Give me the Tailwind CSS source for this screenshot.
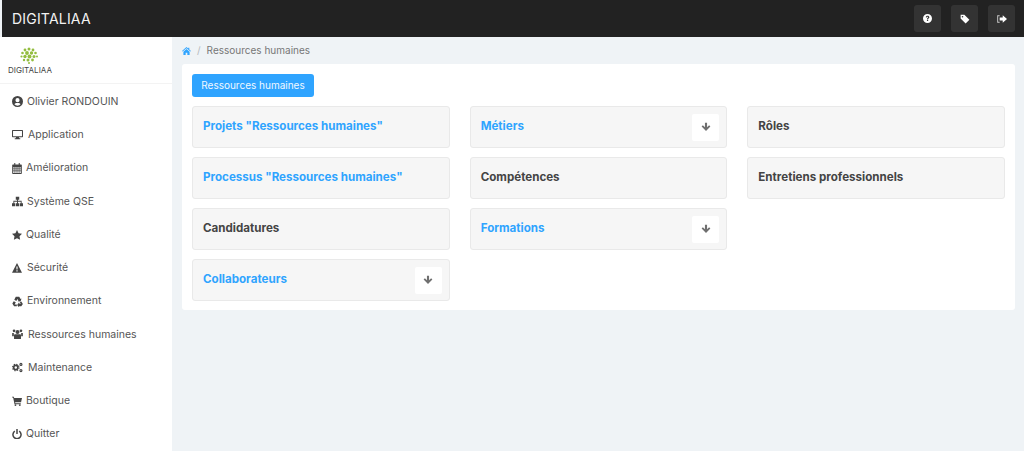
<!doctype html>
<html lang="fr">

<head>
  <meta charset="UTF-8" />
  <title>DIGITALIAA</title>
  <script src="https://cdn.jsdelivr.net/npm/@tailwindcss/browser@4"></script>
</head>

<body class="bg-[#eff3f6] font-['Inter','Noto_Sans',sans-serif] h-[451px] overflow-hidden">
  <header class="h-[37px] ml-[2px] bg-[#222222] flex items-center justify-between pl-[10px] pr-[9px]">
    <span class="text-[#f2f2f2] text-[14px] tracking-[0.2px]">DIGITALIAA</span>
    <div class="flex gap-[10px]">
      <button class="w-[27px] h-[27px] rounded-[3px] bg-[#333333] flex items-center justify-center">
        <svg class="w-[9px] h-[9px]" viewBox="0 0 16 16" fill="#fff"><path fill-rule="evenodd" d="M8 0a8 8 0 100 16A8 8 0 008 0zM7 10h2.200v2.300H7zM4.800 5.800C5 4 6.300 3 8.100 3c1.900 0 3.200 1.100 3.200 2.700 0 1.200-.7 1.800-1.400 2.300-.6.400-.8.700-.8 1.200H7c0-1.200.4-1.800 1.100-2.300.5-.4.900-.6.900-1.100 0-.4-.4-.7-.9-.7-.6 0-1 .3-1.100 1z"/></svg>
      </button>
      <button class="w-[27px] h-[27px] rounded-[3px] bg-[#333333] flex items-center justify-center">
        <svg class="w-[10px] h-[10px]" viewBox="0 0 16 16" fill="#fff"><path fill-rule="evenodd" d="M1 1h6l8 8-6 6-8-8zM4 3a1.300 1.300 0 100 2.600A1.300 1.300 0 004 3z"/></svg>
      </button>
      <button class="w-[27px] h-[27px] rounded-[3px] bg-[#333333] flex items-center justify-center">
        <svg class="w-[11px] h-[10px]" viewBox="0 0 18 16" fill="#fff"><path d="M11 2l7 6-7 6v-3.500H6v-5h5z"/><path d="M6 2H2v12h4v-1.500H3.500v-9H6z" fill="#ccc"/></svg>
      </button>
    </div>
  </header>

  <div class="flex">
    <aside class="w-[172px] h-[414px] bg-white shrink-0 text-[#555555] text-[10.5px]">
      <div class="h-[47px] border-b border-[#f3f3f3] pl-[8px] pt-[10px]">
        <div class="w-[44px] flex flex-col items-center">
          <svg class="w-[18px] h-[17px] shrink-0 -translate-x-[1px]" viewBox="0 0 18 17" fill="#93bd3f">
            <circle cx="9" cy="2" r="1.500"/><circle cx="5" cy="3" r="1.400"/><circle cx="13" cy="3" r="1.400"/>
            <circle cx="2.500" cy="6" r="1.300"/><circle cx="7" cy="6" r="1.900"/><circle cx="11.500" cy="6" r="1.700"/><circle cx="15.500" cy="6" r="1.300"/>
            <circle cx="1.500" cy="9.500" r="1.100"/><circle cx="5" cy="9.500" r="1.700"/><circle cx="9.500" cy="9.500" r="2"/><circle cx="14" cy="9.500" r="1.500"/><circle cx="17" cy="9.500" r="1"/>
            <circle cx="4" cy="13" r="1.200"/><circle cx="8" cy="13" r="1.500"/><circle cx="12.500" cy="13" r="1.400"/><circle cx="9" cy="16" r="1"/>
          </svg>
          <span class="text-[8px] leading-[9px] mt-[2px] text-[#444444] whitespace-nowrap">DIGITALIAA</span>
        </div>
      </div>
      <nav class="flex flex-col pl-[12px] pt-[1px]">
        <a class="h-[33.25px] flex items-center gap-[4px]">
          <svg class="w-[11px] h-[11px]" viewBox="0 0 16 16" fill="#444"><path fill-rule="evenodd" d="M8 0a8 8 0 100 16A8 8 0 008 0zm0 3a3 3 0 110 6 3 3 0 010-6zm0 11a6 6 0 01-4.500-2c.6-1.200 2-1.800 4.500-1.800s3.900.6 4.500 1.800A6 6 0 018 14z"/></svg>
          <span>Olivier RONDOUIN</span>
        </a>
        <a class="h-[33.25px] flex items-center gap-[5px]">
          <svg class="w-[11px] h-[11px]" viewBox="0 0 16 16" fill="#444"><path fill-rule="evenodd" d="M1 1.500h14a1 1 0 011 1V11a1 1 0 01-1 1h-5l.5 1.500H12V15H4v-1.500h1.500L6 12H1a1 1 0 01-1-1V2.500a1 1 0 011-1zm.5 1.500v7.500h13V3z"/></svg>
          <span>Application</span>
        </a>
        <a class="h-[33.25px] flex items-center gap-[4px]">
          <svg class="w-[10px] h-[11px]" viewBox="0 0 14 16" fill="#444"><path fill-rule="evenodd" d="M3 0h1.500v2h5V0H11v2h2a1 1 0 011 1v12a1 1 0 01-1 1H1a1 1 0 01-1-1V3a1 1 0 011-1h2zM1.500 6v2h2V6zm3 0v2h2V6zm3 0v2h2V6zm3 0v2h2V6zm-9 3v2h2V9zm3 0v2h2V9zm3 0v2h2V9zm3 0v2h2V9zm-9 3v2.500h2V12zm3 0v2.500h2V12zm3 0v2.500h2V12zm3 0v2.500h2V12z"/></svg>
          <span>Amélioration</span>
        </a>
        <a class="h-[33.25px] flex items-center gap-[4px]">
          <svg class="w-[11px] h-[11px]" viewBox="0 0 16 16" fill="#444"><path d="M5.500 1h5v4.500H8.700V7H14v3.500h2V15h-4.500v-4.500h1.200V8.300H8.700v2.200h1.800V15h-5v-4.500h1.800V8.300H3.300v2.200h1.200V15H0v-4.500h2V7h5.300V5.500H5.500z"/></svg>
          <span>Système QSE</span>
        </a>
        <a class="h-[33.25px] flex items-center gap-[4px]">
          <svg class="w-[10px] h-[10px]" viewBox="0 0 16 16" fill="#444"><path d="M8 0l2.500 5.200 5.500.8-4 4 1 5.700L8 13l-5 2.700L4 10 0 6l5.500-.8z"/></svg>
          <span>Qualité</span>
        </a>
        <a class="h-[33.25px] flex items-center gap-[5px]">
          <svg class="w-[10px] h-[10px]" viewBox="0 0 16 16" fill="#444"><path fill-rule="evenodd" d="M8 0l8 15.500H0zM7 5.500l.2 5h1.600l.2-5zM7 11.700v2h2v-2z"/></svg>
          <span>Sécurité</span>
        </a>
        <a class="h-[33.25px] flex items-center gap-[4px]">
          <svg class="w-[11px] h-[11px]" viewBox="0 0 16 16" fill="#444"><path d="M5.500 1h5l2 3.300 1.300-.8L12.500 8 8 7.800l1.300-.8L8 4.500 6.300 7.300 3.300 5.600z"/><path d="M2.500 7.500l3 1.700-1.700 3H7V15H3L.5 11z"/><path d="M13.500 8l2.300 3.500L13.500 15H10v1.500L7.500 13 10 9.500V11h3.500L11 9.500z"/></svg>
          <span>Environnement</span>
        </a>
        <a class="h-[33.25px] flex items-center gap-[5px]">
          <svg class="w-[11px] h-[10px]" viewBox="0 0 16 15" fill="#444"><circle cx="8" cy="4.500" r="3"/><circle cx="2.800" cy="2.800" r="2"/><circle cx="13.200" cy="2.800" r="2"/><path d="M3.500 8h9l.7 1v6H2.800V9z"/><path d="M0 6h2.500v5H0zM13.500 6H16v5h-2.500z"/></svg>
          <span>Ressources humaines</span>
        </a>
        <a class="h-[33.25px] flex items-center gap-[5px]">
          <svg class="w-[11px] h-[11px]" viewBox="0 0 16 16" fill="none" stroke="#444"><circle cx="5.500" cy="8" r="3" stroke-width="2.400"/><circle cx="5.500" cy="8" r="4.700" stroke-width="1.600" stroke-dasharray="2 1.700"/><circle cx="13" cy="3.500" r="1.500" stroke-width="1.600"/><circle cx="13" cy="12.500" r="1.500" stroke-width="1.600"/></svg>
          <span>Maintenance</span>
        </a>
        <a class="h-[33.25px] flex items-center gap-[4px]">
          <svg class="w-[10px] h-[10px]" viewBox="0 0 16 16" fill="#444"><path d="M0 1h3l.5 2H16l-1.500 7H5l.3 1.500H14V13H4L1.800 2.500H0z"/><circle cx="5.500" cy="14.500" r="1.500"/><circle cx="12.500" cy="14.500" r="1.500"/></svg>
          <span>Boutique</span>
        </a>
        <a class="h-[33.25px] flex items-center gap-[4px]">
          <svg class="w-[10px] h-[10px]" viewBox="0 0 16 16" fill="none" stroke="#444" stroke-width="2.400"><path d="M4.500 3.500a6.500 6.500 0 107 0"/><path d="M8 0v8"/></svg>
          <span>Quitter</span>
        </a>
      </nav>
    </aside>

    <main class="flex-1 pl-[10px] pr-[9px]">
      <div class="h-[27px] flex items-center gap-[6px] text-[10px] text-[#777777]">
        <svg class="w-[9px] h-[8px]" viewBox="0 0 16 14" fill="#2fa4ff"><path d="M8 0l3 2.600V1h2v3.300L16 7l-1 1-7-6-7 6-1-1z"/><path d="M8 3.500l5.500 4.700V14H9.500v-4h-3v4H2.500V8.200z"/></svg>
        <span class="text-[#b5b9bd]">/</span>
        <span>Ressources humaines</span>
      </div>

      <section class="h-[246px] bg-white rounded-[3px] px-[10px] pt-[10px]">
        <button class="block h-[23px] w-[122px] rounded-[3px] bg-[#2fa4ff] text-[#f0f8ff] text-[10px]">Ressources humaines</button>
        <div class="grid grid-cols-3 gap-[20px] mt-[9px] text-[11.6px] font-bold text-[#444444]">
          <div class="flex flex-col gap-[9px]">
            <div class="h-[42px] bg-[#f6f6f6] border border-[#e9e9e9] rounded-[3px] flex items-center px-[10px] text-[#2fa4ff]">Projets "Ressources humaines"</div>
            <div class="h-[42px] bg-[#f6f6f6] border border-[#e9e9e9] rounded-[3px] flex items-center px-[10px] text-[#2fa4ff]">Processus "Ressources humaines"</div>
            <div class="h-[42px] bg-[#f6f6f6] border border-[#e9e9e9] rounded-[3px] flex items-center px-[10px]">Candidatures</div>
            <div class="h-[42px] bg-[#f6f6f6] border border-[#e9e9e9] rounded-[3px] flex items-center justify-between pl-[10px] pr-[7px] text-[#2fa4ff]">
              <span>Collaborateurs</span>
              <span class="w-[27px] h-[27px] bg-white rounded-[2px] flex items-center justify-center">
                <svg class="w-[10px] h-[10px]" viewBox="0 0 16 16" fill="#6f6f6f"><path d="M6.300 1h3.400v7.500L13 5.200l2 2-7 7.300-7-7.300 2-2 3.300 3.300z"/></svg>
              </span>
            </div>
          </div>
          <div class="flex flex-col gap-[9px]">
            <div class="h-[42px] bg-[#f6f6f6] border border-[#e9e9e9] rounded-[3px] flex items-center justify-between pl-[10px] pr-[7px] text-[#2fa4ff]">
              <span>Métiers</span>
              <span class="w-[27px] h-[27px] bg-white rounded-[2px] flex items-center justify-center">
                <svg class="w-[10px] h-[10px]" viewBox="0 0 16 16" fill="#6f6f6f"><path d="M6.300 1h3.400v7.500L13 5.200l2 2-7 7.300-7-7.300 2-2 3.300 3.300z"/></svg>
              </span>
            </div>
            <div class="h-[42px] bg-[#f6f6f6] border border-[#e9e9e9] rounded-[3px] flex items-center px-[10px]">Compétences</div>
            <div class="h-[42px] bg-[#f6f6f6] border border-[#e9e9e9] rounded-[3px] flex items-center justify-between pl-[10px] pr-[7px] text-[#2fa4ff]">
              <span>Formations</span>
              <span class="w-[27px] h-[27px] bg-white rounded-[2px] flex items-center justify-center">
                <svg class="w-[10px] h-[10px]" viewBox="0 0 16 16" fill="#6f6f6f"><path d="M6.300 1h3.400v7.500L13 5.200l2 2-7 7.300-7-7.300 2-2 3.300 3.300z"/></svg>
              </span>
            </div>
          </div>
          <div class="flex flex-col gap-[9px]">
            <div class="h-[42px] bg-[#f6f6f6] border border-[#e9e9e9] rounded-[3px] flex items-center px-[10px]">Rôles</div>
            <div class="h-[42px] bg-[#f6f6f6] border border-[#e9e9e9] rounded-[3px] flex items-center px-[10px]">Entretiens professionnels</div>
          </div>
        </div>
      </section>
    </main>
  </div>
</body>

</html>
